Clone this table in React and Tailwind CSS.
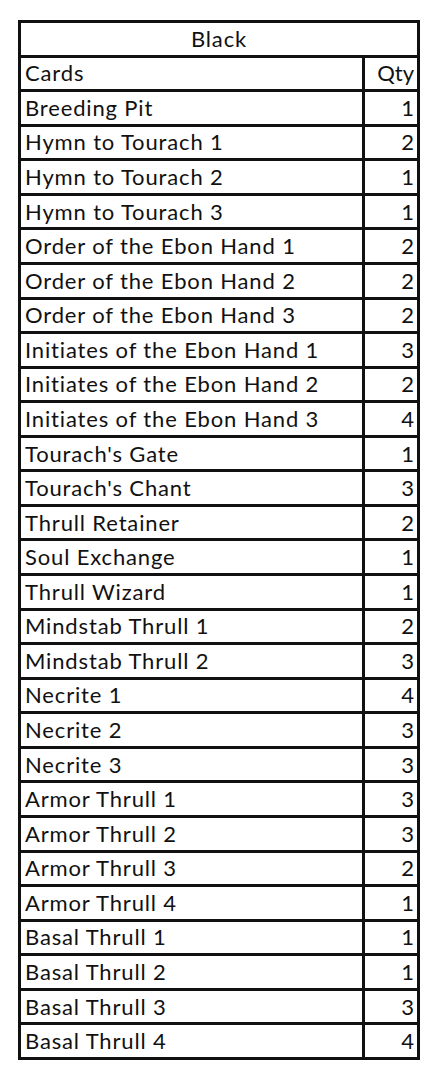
import React from "react";

const cards = [
  ["Breeding Pit", 1],
  ["Hymn to Tourach 1", 2],
  ["Hymn to Tourach 2", 1],
  ["Hymn to Tourach 3", 1],
  ["Order of the Ebon Hand 1", 2],
  ["Order of the Ebon Hand 2", 2],
  ["Order of the Ebon Hand 3", 2],
  ["Initiates of the Ebon Hand 1", 3],
  ["Initiates of the Ebon Hand 2", 2],
  ["Initiates of the Ebon Hand 3", 4],
  ["Tourach's Gate", 1],
  ["Tourach's Chant", 3],
  ["Thrull Retainer", 2],
  ["Soul Exchange", 1],
  ["Thrull Wizard", 1],
  ["Mindstab Thrull 1", 2],
  ["Mindstab Thrull 2", 3],
  ["Necrite 1", 4],
  ["Necrite 2", 3],
  ["Necrite 3", 3],
  ["Armor Thrull 1", 3],
  ["Armor Thrull 2", 3],
  ["Armor Thrull 3", 2],
  ["Armor Thrull 4", 1],
  ["Basal Thrull 1", 1],
  ["Basal Thrull 2", 1],
  ["Basal Thrull 3", 3],
  ["Basal Thrull 4", 4],
];

const Row = ({ name, qty }) => (
  <div className="flex h-[34.57px] border-b-[3px] border-[#111]">
    <div className="flex-1 flex items-center pl-[4px] border-r-[3px] border-[#111] whitespace-nowrap">
      {name}
    </div>
    <div className="w-[52px] flex items-center justify-end pr-[3px] tracking-normal">{qty}</div>
  </div>
);

export default function App() {
  return (
    <div className="min-h-screen bg-white pt-[20px] pl-[18px]">
      <div
        className="w-[402px] border-x-[3px] border-t-[3px] border-[#111] text-[22px] tracking-[0.85px] leading-none text-[#111]"
        style={{ fontFamily: "Lato, 'Open Sans', sans-serif" }}
      >
        <div className="flex h-[34.57px] items-center justify-center border-b-[3px] border-[#111]">
          Black
        </div>
        <Row name="Cards" qty="Qty" />
        {cards.map(([name, qty]) => (
          <Row key={name} name={name} qty={qty} />
        ))}
      </div>
    </div>
  );
}
